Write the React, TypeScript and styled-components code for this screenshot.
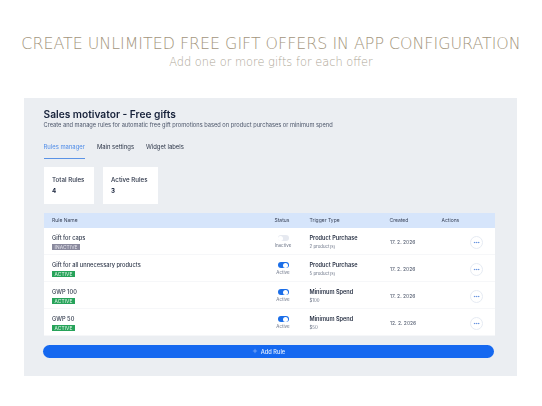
import React from "react";
import styled, { createGlobalStyle } from "styled-components";
import { Plus, MoreHorizontal } from "lucide-react";

const GlobalStyle = createGlobalStyle`
  html, body {
    margin: 0;
    padding: 0;
    background: #fff;
  }
  * {
    box-sizing: border-box;
  }
`;

const Page = styled.div`
  width: 542px;
  height: 406px;
  overflow: hidden;
  padding-top: 32px;
  font-family: Inter, "Liberation Sans", sans-serif;
`;

const Headline = styled.h1`
  margin: 0;
  height: 21px;
  text-align: center;
  white-space: nowrap;
  font-family: "DejaVu Sans", sans-serif;
  font-weight: 200;
  font-size: 15.85px;
  line-height: 21px;
  color: #a3957c;
  transform: translateY(0.5px);
`;

const Subline = styled.p`
  margin: 0;
  height: 18px;
  text-align: center;
  white-space: nowrap;
  font-family: "DejaVu Sans", sans-serif;
  font-weight: 200;
  font-size: 11.4px;
  line-height: 18px;
  color: #ada696;
`;

const Panel = styled.section`
  margin: 27px 25px 0 24px;
  height: 278px;
  background: #ebeef2;
  padding: 9px 22px 0 19.5px;
  filter: blur(0.35px);
`;

const Title = styled.h2`
  margin: 0;
  font-size: 10.2px;
  line-height: 14px;
  font-weight: 600;
  color: #16213a;
`;

const Subtitle = styled.p`
  margin: 0;
  font-size: 5.7px;
  line-height: 8px;
  color: #4a5468;
`;

const Tabs = styled.nav`
  display: flex;
  gap: 12px;
  margin-top: 13px;
  height: 17px;
`;

const Tab = styled.div<{ $active?: boolean }>`
  height: 17px;
  font-size: 5.9px;
  line-height: 9px;
  color: ${(p) => (p.$active ? "#4d8be8" : "#2a3346")};
  border-bottom: 1px solid ${(p) => (p.$active ? "#5b93e6" : "transparent")};
`;

const Stats = styled.div`
  display: flex;
  gap: 9px;
  margin-top: 8px;
`;

const StatCard = styled.div<{ $width: number }>`
  width: ${(p) => p.$width}px;
  height: 37px;
  background: #fff;
  padding: 8px 8px 0 8.5px;
`;

const StatLabel = styled.div`
  font-size: 6.2px;
  line-height: 9px;
  font-weight: 500;
  color: #2a3346;
`;

const StatValue = styled.div`
  margin-top: 2px;
  font-size: 6.2px;
  line-height: 9px;
  font-weight: 700;
  color: #16213a;
`;

const Table = styled.div`
  margin-top: 8.5px;
  width: 451px;
`;

const columns = "222.5px 35px 80px 52px 1fr";

const HeaderRow = styled.div`
  display: grid;
  grid-template-columns: ${columns};
  align-items: center;
  height: 15.5px;
  padding-left: 8.5px;
  background: #d6e5fb;
  font-size: 5px;
  color: #3a445a;
`;

const Row = styled.div`
  display: grid;
  grid-template-columns: ${columns};
  align-items: center;
  height: 27px;
  padding: 2px 0 0 8.5px;
  background: #fff;
  border-bottom: 1px solid #f6f7f9;
`;

const NameCell = styled.div`
  display: flex;
  flex-direction: column;
  align-items: flex-start;
  gap: 1.5px;
`;

const RuleName = styled.div`
  font-size: 5.7px;
  line-height: 8px;
  font-weight: 500;
  color: #2f384a;
`;

const Badge = styled.span<{ $active: boolean }>`
  display: block;
  height: 6px;
  padding: 0 2.6px;
  font-size: 4.8px;
  line-height: 6px;
  letter-spacing: 0.1px;
  color: ${(p) => (p.$active ? "#e8f8ee" : "#e4e4ec")};
  background: ${(p) => (p.$active ? "#27a35a" : "#8a8a9e")};
`;

const StatusCell = styled.div`
  display: flex;
  flex-direction: column;
  align-items: center;
  width: 17px;
  gap: 2px;
`;

const Toggle = styled.div<{ $on: boolean }>`
  display: flex;
  align-items: center;
  justify-content: ${(p) => (p.$on ? "flex-end" : "flex-start")};
  width: 11px;
  height: 6.5px;
  padding: 0.8px;
  border-radius: 4px;
  background: ${(p) => (p.$on ? "#1b6ee8" : "#e6e9f0")};
`;

const Knob = styled.div`
  width: 5px;
  height: 5px;
  border-radius: 50%;
  background: #fff;
`;

const StatusText = styled.div`
  font-size: 4.5px;
  line-height: 6px;
  color: #6a7386;
`;

const TriggerCell = styled.div`
  display: flex;
  flex-direction: column;
  gap: 1.5px;
`;

const TriggerName = styled.div`
  font-size: 5.6px;
  line-height: 8px;
  font-weight: 600;
  color: #2a3346;
`;

const TriggerNote = styled.div`
  font-size: 4.4px;
  line-height: 6px;
  color: #6a7386;
`;

const DateCell = styled.div`
  font-size: 5px;
  color: #4a5468;
  padding-left: 0.5px;
`;

const ActionCell = styled.div`
  display: flex;
  justify-content: flex-end;
  padding-right: 11.5px;
`;

const MoreButton = styled.div`
  display: flex;
  align-items: center;
  justify-content: center;
  width: 13px;
  height: 13px;
  border-radius: 50%;
  border: 0.5px solid #e6ebf3;
  background: #fff;
  color: #3f78d8;
`;

const AddButton = styled.div`
  display: flex;
  align-items: center;
  justify-content: center;
  gap: 3px;
  width: 451px;
  height: 13px;
  margin: 8.5px 0 0 -0.5px;
  border-radius: 7px;
  background: #1568f0;
  color: #e6f0ff;
  font-size: 5.7px;
  font-weight: 500;
`;

interface IRule {
  name: string;
  active: boolean;
  trigger: string;
  note: string;
  created: string;
}

const rules: IRule[] = [
  { name: "Gift for caps", active: false, trigger: "Product Purchase", note: "2 product(s)", created: "17. 2. 2026" },
  { name: "Gift for all unnecessary products", active: true, trigger: "Product Purchase", note: "5 product(s)", created: "17. 2. 2026" },
  { name: "GWP 100", active: true, trigger: "Minimum Spend", note: "$100", created: "17. 2. 2026" },
  { name: "GWP 50", active: true, trigger: "Minimum Spend", note: "$50", created: "12. 2. 2026" },
];

function App() {
  return (
    <Page>
      <GlobalStyle />
      <Headline>CREATE UNLIMITED FREE GIFT OFFERS IN APP CONFIGURATION</Headline>
      <Subline>Add one or more gifts for each offer</Subline>
      <Panel>
        <Title>Sales motivator - Free gifts</Title>
        <Subtitle>
          Create and manage rules for automatic free gift promotions based on product purchases or minimum spend
        </Subtitle>
        <Tabs>
          <Tab $active>Rules manager</Tab>
          <Tab>Main settings</Tab>
          <Tab>Widget labels</Tab>
        </Tabs>
        <Stats>
          <StatCard $width={50}>
            <StatLabel>Total Rules</StatLabel>
            <StatValue>4</StatValue>
          </StatCard>
          <StatCard $width={55}>
            <StatLabel>Active Rules</StatLabel>
            <StatValue>3</StatValue>
          </StatCard>
        </Stats>
        <Table>
          <HeaderRow>
            <span>Rule Name</span>
            <span>Status</span>
            <span>Trigger Type</span>
            <span>Created</span>
            <span>Actions</span>
          </HeaderRow>
          {rules.map((rule) => (
            <Row key={rule.name}>
              <NameCell>
                <RuleName>{rule.name}</RuleName>
                <Badge $active={rule.active}>{rule.active ? "ACTIVE" : "INACTIVE"}</Badge>
              </NameCell>
              <StatusCell>
                <Toggle $on={rule.active}>
                  <Knob />
                </Toggle>
                <StatusText>{rule.active ? "Active" : "Inactive"}</StatusText>
              </StatusCell>
              <TriggerCell>
                <TriggerName>{rule.trigger}</TriggerName>
                <TriggerNote>{rule.note}</TriggerNote>
              </TriggerCell>
              <DateCell>{rule.created}</DateCell>
              <ActionCell>
                <MoreButton>
                  <MoreHorizontal size={7} strokeWidth={2} />
                </MoreButton>
              </ActionCell>
            </Row>
          ))}
        </Table>
        <AddButton>
          <Plus size={6} strokeWidth={1.5} />
          Add Rule
        </AddButton>
      </Panel>
    </Page>
  );
}

export default App;
